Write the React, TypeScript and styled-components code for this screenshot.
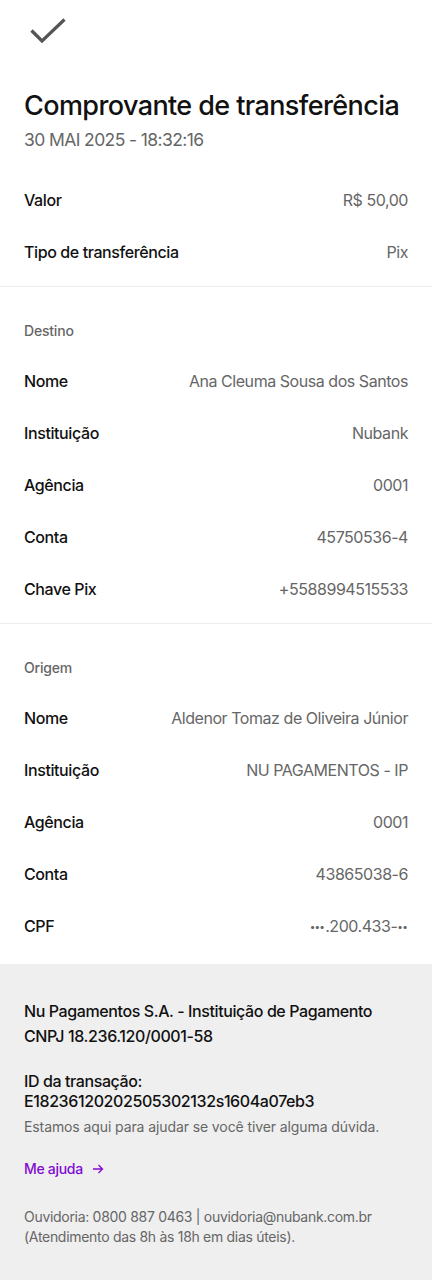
import React from "react";
import styled, { createGlobalStyle } from "styled-components";

const Global = createGlobalStyle`
  html, body { margin: 0; padding: 0; background: #fff; }
  body { font-family: Inter, "Noto Sans", sans-serif; color: #111; -webkit-font-smoothing: antialiased; }
  * { box-sizing: border-box; }
`;

const Page = styled.div`
  width: 432px;
  min-height: 1280px;
  display: flex;
  flex-direction: column;
  background: #fff;
`;

const Header = styled.header`
  padding: 16px 24px 0;
  display: flex;
  flex-direction: column;
`;

const CheckWrap = styled.div`
  width: 48px;
  height: 32px;
  display: flex;
  align-items: center;
  justify-content: flex-start;
  margin-left: 6px;
`;

const Title = styled.h1`
  margin: 40px 0 0;
  font-size: 27px;
  line-height: 36px;
  font-weight: 500;
  letter-spacing: -0.6px;
  white-space: nowrap;
  color: #111;
`;

const DateText = styled.div`
  margin-top: 4px;
  font-size: 17.5px;
  line-height: 24px;
  color: #666;
  letter-spacing: -0.6px;
`;

const Section = styled.section<{ $top: number; $bottom: number }>`
  padding: ${(p) => p.$top}px 24px ${(p) => p.$bottom}px;
  display: flex;
  flex-direction: column;
`;

const Divider = styled.hr`
  margin: 0;
  border: none;
  height: 1px;
  background: #ececec;
`;

const SectionLabel = styled.div`
  font-size: 14px;
  line-height: 20px;
  font-weight: 500;
  color: #666;
  letter-spacing: -0.2px;
  margin-bottom: 14px;
`;

const Row = styled.div`
  height: 52px;
  display: flex;
  align-items: center;
  justify-content: space-between;
`;

const Label = styled.span`
  font-size: 16px;
  font-weight: 500;
  color: #111;
  letter-spacing: -0.4px;
`;

const Value = styled.span`
  font-size: 16px;
  font-weight: 400;
  color: #666;
  letter-spacing: -0.45px;
  text-align: right;
`;

const Dots = styled.span`
  font-size: 10px;
  letter-spacing: -0.8px;
  vertical-align: 2px;
  margin-right: 1px;
`;

const Footer = styled.footer`
  flex: 1;
  background: #efefef;
  padding: 35px 24px 40px;
  display: flex;
  flex-direction: column;
`;

const Legal = styled.p`
  margin: 0;
  font-size: 16px;
  line-height: 25px;
  font-weight: 500;
  color: #111;
  letter-spacing: -0.4px;
`;

const TxBlock = styled.p`
  margin: 22px 0 0;
  font-size: 16px;
  line-height: 20px;
  font-weight: 500;
  color: #111;
  letter-spacing: -0.4px;
`;

const Help = styled.p`
  margin: 6px 0 0;
  font-size: 14px;
  line-height: 20px;
  color: #666;
  letter-spacing: -0.1px;
`;

const HelpLink = styled.a`
  margin-top: 22px;
  display: inline-flex;
  align-items: center;
  gap: 9px;
  font-size: 14px;
  line-height: 20px;
  font-weight: 500;
  color: #820ad1;
  text-decoration: none;
  letter-spacing: -0.3px;
`;

const Ombudsman = styled.p`
  margin: 28px 0 0;
  font-size: 14px;
  line-height: 20px;
  color: #666;
  letter-spacing: -0.3px;
`;

type Item = [string, React.ReactNode];

const top: Item[] = [
  ["Valor", "R$ 50,00"],
  ["Tipo de transferência", "Pix"],
];

const destino: Item[] = [
  ["Nome", "Ana Cleuma Sousa dos Santos"],
  ["Instituição", "Nubank"],
  ["Agência", "0001"],
  ["Conta", "45750536-4"],
  ["Chave Pix", "+5588994515533"],
];

const origem: Item[] = [
  ["Nome", "Aldenor Tomaz de Oliveira Júnior"],
  ["Instituição", "NU PAGAMENTOS - IP"],
  ["Agência", "0001"],
  ["Conta", "43865038-6"],
  [
    "CPF",
    <>
      <Dots>•••</Dots>.200.433-<Dots>••</Dots>
    </>,
  ],
];

const Rows = ({ items }: { items: Item[] }) => (
  <>
    {items.map(([l, v]) => (
      <Row key={l}>
        <Label>{l}</Label>
        <Value>{v}</Value>
      </Row>
    ))}
  </>
);

export default function App() {
  return (
    <Page>
      <Global />
      <Header>
        <CheckWrap>
          <svg width="38" height="28" viewBox="0 0 38 28" fill="none">
            <path d="M1.5 12.5 L12 23 L34.5 1.5" stroke="#555" strokeWidth="3.2" strokeLinecap="butt" strokeLinejoin="miter" />
          </svg>
        </CheckWrap>
        <Title>Comprovante de transferência</Title>
        <DateText>30 MAI 2025 - 18:32:16</DateText>
      </Header>
      <Section $top={22} $bottom={8}>
        <Rows items={top} />
      </Section>
      <Divider />
      <Section $top={34} $bottom={8}>
        <SectionLabel>Destino</SectionLabel>
        <Rows items={destino} />
      </Section>
      <Divider />
      <Section $top={34} $bottom={12}>
        <SectionLabel>Origem</SectionLabel>
        <Rows items={origem} />
      </Section>
      <Footer>
        <Legal>
          Nu Pagamentos S.A. - Instituição de Pagamento
          <br />
          CNPJ 18.236.120/0001-58
        </Legal>
        <TxBlock>
          ID da transação:
          <br />
          E18236120202505302132s1604a07eb3
        </TxBlock>
        <Help>Estamos aqui para ajudar se você tiver alguma dúvida.</Help>
        <div>
          <HelpLink href="#">
            Me ajuda
            <svg width="12" height="12" viewBox="0 0 12 12" fill="none">
              <path d="M1 6 H10.5 M6.5 2 L10.5 6 L6.5 10" stroke="#820ad1" strokeWidth="1.3" />
            </svg>
          </HelpLink>
        </div>
        <Ombudsman>
          Ouvidoria: 0800 887 0463 | ouvidoria@nubank.com.br
          <br />
          (Atendimento das 8h às 18h em dias úteis).
        </Ombudsman>
      </Footer>
    </Page>
  );
}
